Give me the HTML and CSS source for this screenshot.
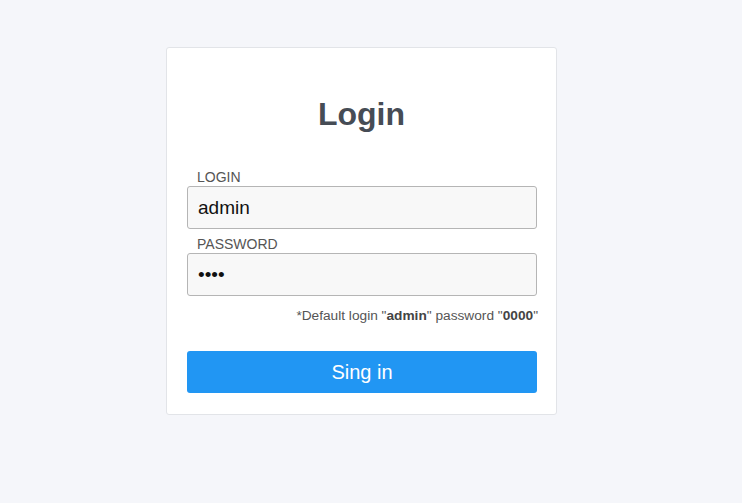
FILE: index.html
```html
<!DOCTYPE html>
<html>
<head>
<meta charset="utf-8">
<link rel="stylesheet" href="styles.css">
</head>
<body>
<div class="card">
  <h1 class="title">Login</h1>
  <form class="form">
    <label class="label" for="login">LOGIN</label>
    <input class="input" id="login" type="text" value="admin">
    <label class="label label-gap" for="password">PASSWORD</label>
    <input class="input" id="password" type="password" value="0000">
    <p class="note">*Default login "<b>admin</b>" password "<b>0000</b>"</p>
    <button class="button" type="button">Sing in</button>
  </form>
</div>
</body>
</html>
```
FILE: styles.css
```css
html, body {
  margin: 0;
  padding: 0;
  background: #f5f6fa;
  font-family: "Liberation Sans", Arial, sans-serif;
}
body {
  padding-top: 47px;
  height: 503px;
  box-sizing: border-box;
}
.card {
  margin-left: 166px;
  width: 391px;
  box-sizing: border-box;
  background: #fff;
  border: 1px solid #e2e4e8;
  border-radius: 3px;
  padding: 20px 20px 21px 20px;
}
.title {
  margin: 28px 0 0 0;
  font-size: 32px;
  line-height: 36px;
  font-weight: bold;
  color: #464c55;
  text-align: center;
}
.form {
  margin-top: 37px;
  display: flex;
  flex-direction: column;
}
.label {
  display: block;
  font-size: 14px;
  line-height: 16px;
  color: #555;
  padding-left: 10px;
  margin-bottom: 1px;
}
.label-gap {
  margin-top: 7px;
}
.input {
  display: block;
  width: 350px;
  height: 43px;
  box-sizing: border-box;
  margin: 0;
  border: 1px solid #b5b5b5;
  border-radius: 3px;
  background: #f8f8f8;
  padding: 0 10px;
  font-family: "Liberation Sans", Arial, sans-serif;
  font-size: 19px;
  color: #111;
  outline: none;
}
.note {
  margin: 12px -2px 0 0;
  font-size: 13.7px;
  line-height: 16px;
  text-align: right;
  color: #555;
}
.note b {
  color: #444;
}
.button {
  display: block;
  margin-top: 27px;
  width: 350px;
  height: 42px;
  border: none;
  border-radius: 3px;
  background: #2196f3;
  color: #fff;
  font-family: "Liberation Sans", Arial, sans-serif;
  font-size: 20px;
  cursor: pointer;
}
```
